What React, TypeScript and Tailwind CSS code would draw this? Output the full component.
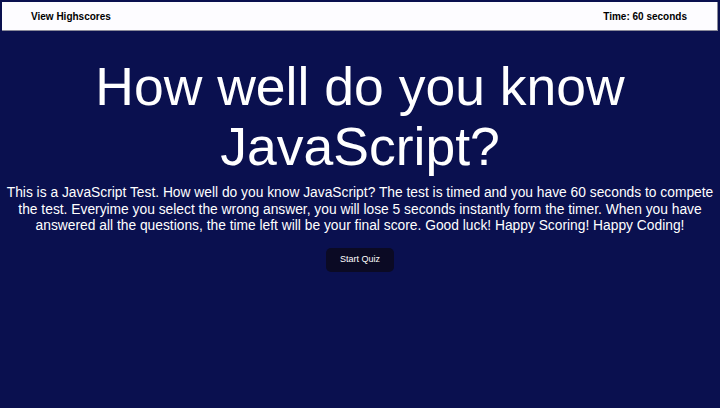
export default function App() {
  return (
    <div className="min-h-screen w-full bg-[#0a104f] pt-[2px] font-['Liberation_Sans',Arial,sans-serif] text-white">
      {/* header */}
      <header className="mx-[2px] flex h-[29px] items-center justify-between border-b border-r border-[#8a8a99] bg-[#fdfcff] pl-[29px] pr-[30px] text-[10px] font-bold text-black">
        <span>View Highscores</span>
        <span>Time: 60 seconds</span>
      </header>

      <main className="flex flex-col items-center text-center">
        <h1 className="mt-[26px] text-[53.5px] leading-[60px]">
          How well do you know
          <br />
          JavaScript?
        </h1>
        <p className="mt-[8px] whitespace-nowrap text-[13.8px] leading-[16.5px]">
          This is a JavaScript Test. How well do you know JavaScript? The test is timed and you have 60 seconds to compete
          <br />
          the test. Everyime you select the wrong answer, you will lose 5 seconds instantly form the timer. When you have
          <br />
          answered all the questions, the time left will be your final score. Good luck! Happy Scoring! Happy Coding!
        </p>
        <button className="mt-[13px] h-[24px] w-[68px] rounded-[5px] bg-[#0b0a24] text-[9px] text-white">
          Start Quiz
        </button>
      </main>
    </div>
  );
}
